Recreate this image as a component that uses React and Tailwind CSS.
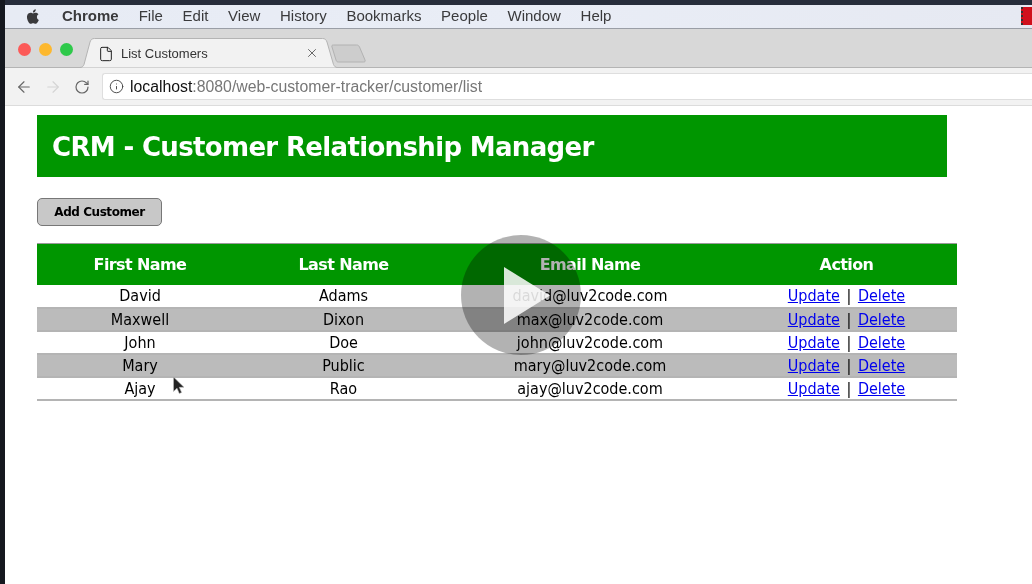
import { File, X, ArrowLeft, ArrowRight, RotateCw, Info } from 'lucide-react'

const menus = ['File', 'Edit', 'View', 'History', 'Bookmarks', 'People', 'Window', 'Help']

const customers = [
  ['David', 'Adams', 'david@luv2code.com'],
  ['Maxwell', 'Dixon', 'max@luv2code.com'],
  ['John', 'Doe', 'john@luv2code.com'],
  ['Mary', 'Public', 'mary@luv2code.com'],
  ['Ajay', 'Rao', 'ajay@luv2code.com'],
]

function AppleLogo() {
  return (
    <svg width="15" height="17" viewBox="0 0 24 28" fill="#3a3a3c">
      <path d="M17.6 14.8c0-3 2.4-4.4 2.6-4.5-1.400-2.100-3.600-2.400-4.400-2.400-1.900-.2-3.600 1.100-4.600 1.100s-2.400-1.100-4-1.100c-2 0-3.900 1.200-5 3-2.100 3.700-.5 9.200 1.500 12.200 1 1.500 2.200 3.100 3.800 3 1.500-.1 2.100-1 3.900-1s2.300 1 3.900 1c1.600 0 2.700-1.500 3.700-3 1.200-1.700 1.600-3.300 1.700-3.400-.1 0-3.100-1.200-3.100-4.900z" />
      <path d="M14.600 5.800c.8-1 1.400-2.400 1.200-3.800-1.200.1-2.600.8-3.500 1.800-.8.900-1.400 2.300-1.200 3.700 1.300.1 2.700-.7 3.500-1.700z" />
    </svg>
  )
}

function TabShape() {
  return (
    <svg className="absolute left-[72px] top-[9px]" width="300" height="30" viewBox="0 0 300 30">
      <path d="M0 29.500h3c2 0 3-1 4-3L13 4c1-2.500 2-3.500 4.500-3.500h228c2.500 0 3.500 1 4.500 3.500l6.500 22.500c1 2 2 3 4 3h40" fill="#f2f2f2" stroke="#b4b4b4" />
      <path d="M255 9c-.5-1.500 0-2 1.500-2h23c1.500 0 2.200.5 3 2l5.500 13c.5 1.500 0 2-1.500 2h-25c-1.500 0-2-.5-2.500-2z" fill="#cdcdcd" stroke="#b2b2b2" />
    </svg>
  )
}

function Cursor() {
  return (
    <svg className="absolute left-[172px] top-[376px]" width="14" height="20" viewBox="0 0 14 20">
      <path d="M1.500 1v14.500l3.500-3.300 2.300 5.300 2.300-1-2.300-5.200h4.700z" fill="#222" stroke="#bbb" strokeWidth="0.6" />
    </svg>
  )
}

export default function App() {
  return (
    <div className="relative w-[1032px] h-[584px] overflow-hidden flex bg-white font-['Liberation_Sans',sans-serif] blur-[0.4px]">
      <div className="w-[5px] shrink-0 bg-[#15181f]" />
      <div className="flex-1 flex flex-col min-w-0">
        <div className="h-[5px] bg-[#272d3b]" />

        {/* mac menu bar */}
        <div className="h-[24px] flex items-center bg-gradient-to-r from-[#e7ebf4] via-[#e9edf6] to-[#e6e9f2] border-b border-[#9a9ea6] text-[15px] text-[#3a3a3c] relative">
          <div className="ml-[21px] mr-[21px] flex"><AppleLogo /></div>
          <span className="font-bold mr-[20px]">Chrome</span>
          <div className="flex gap-[19.700px]">
            {menus.map(m => <span key={m}>{m}</span>)}
          </div>
          <div className="absolute right-0 top-[2px] w-[11px] h-[18px] bg-[#d0101c] border-l-2 border-dotted border-[#333]" />
        </div>

        {/* tab strip */}
        <div className="h-[39px] relative bg-[#d8d8d8] border-b border-[#b4b4b4]">
          <div className="absolute left-[13px] top-[14px] flex gap-[8px]">
            <div className="w-[13px] h-[13px] rounded-full bg-[#fc5a58]" />
            <div className="w-[13px] h-[13px] rounded-full bg-[#fdb82e]" />
            <div className="w-[13px] h-[13px] rounded-full bg-[#2ec94a]" />
          </div>
          <TabShape />
          <div className="absolute left-[93px] top-[15px] flex items-center text-[13px] text-[#333]">
            <File size={16} strokeWidth={1.5} color="#222" />
            <span className="ml-[7px]">List Customers</span>
          </div>
          <X className="absolute left-[300px] top-[17px]" size={14} strokeWidth={1.5} color="#555" />
        </div>

        {/* toolbar */}
        <div className="h-[38px] flex items-center bg-[#f2f2f2] border-b border-[#dcdcdc]">
          <ArrowLeft className="ml-[10px]" size={18} strokeWidth={1.5} color="#666" />
          <ArrowRight className="ml-[11px]" size={18} strokeWidth={1.5} color="#d4d4d4" />
          <RotateCw className="ml-[12px]" size={16} strokeWidth={1.8} color="#666" />
          <div className="ml-[12px] flex-1 h-[27px] flex items-center bg-white rounded-l-[3px] border border-r-0 border-[#dedede] text-[15.800px]">
            <Info className="ml-[6px]" size={15} strokeWidth={1.5} color="#444" />
            <span className="ml-[6px] text-[#111]">localhost</span>
            <span className="text-[#777]">:8080/web-customer-tracker/customer/list</span>
          </div>
        </div>

        {/* page */}
        <div className="flex-1 pl-[32px] pt-[9px] font-['DejaVu_Sans',sans-serif]">
          <div className="w-[910px] h-[62px] flex items-center pl-[15px] pt-[2px] bg-[#009600] text-white text-[26px] font-bold tracking-[-0.66px]">
            CRM - Customer Relationship Manager
          </div>
          <button className="mt-[21px] w-[125px] h-[28px] flex items-center justify-center bg-[#c8c8c8] border border-[#777] rounded-[5px] text-[12px] font-bold text-black tracking-[-0.45px]">
            Add Customer
          </button>
          <table className="mt-[17px] w-[920px] table-fixed border-collapse text-[16px] text-black text-center font-['DejaVu_Sans_Condensed','DejaVu_Sans',sans-serif]">
            <colgroup>
              <col className="w-[206px]" />
              <col className="w-[201px]" />
              <col className="w-[292px]" />
              <col className="w-[221px]" />
            </colgroup>
            <thead>
              <tr className="h-[41px] bg-[#009600] text-white font-bold font-['DejaVu_Sans',sans-serif] tracking-[-0.6px] border-t border-[#999]">
                <th className="pt-[1px]">First Name</th>
                <th className="pt-[1px]">Last Name</th>
                <th className="pt-[1px]">Email Name</th>
                <th className="pt-[1px]">Action</th>
              </tr>
            </thead>
            <tbody>
              {customers.map((c, i) => (
                <tr key={c[0]} className={`h-[23px] border-b-2 border-[#b4b4b4] leading-[20px] ${i % 2 ? 'bg-[#bbbbbb]' : 'bg-white'}`}>
                  <td className="p-0 pt-[1px]">{c[0]}</td>
                  <td className="p-0 pt-[1px]">{c[1]}</td>
                  <td className="p-0 pt-[1px]">{c[2]}</td>
                  <td className="p-0 pt-[1px]">
                    <a className="text-[#0000ee] underline" href="#update">Update</a>
                    <span className="mx-[2px]"> | </span>
                    <a className="text-[#0000ee] underline" href="#delete">Delete</a>
                  </td>
                </tr>
              ))}
            </tbody>
          </table>
        </div>
      </div>

      <Cursor />

      {/* video play overlay */}
      <div className="absolute left-[461px] top-[235px] w-[120px] h-[120px] rounded-full bg-black/30 flex items-center justify-center">
        <svg width="46" height="57" viewBox="0 0 46 57" className="ml-[12px]">
          <path d="M0 0L46 28.500L0 57z" fill="#fff" fillOpacity="0.85" />
        </svg>
      </div>
    </div>
  )
}
